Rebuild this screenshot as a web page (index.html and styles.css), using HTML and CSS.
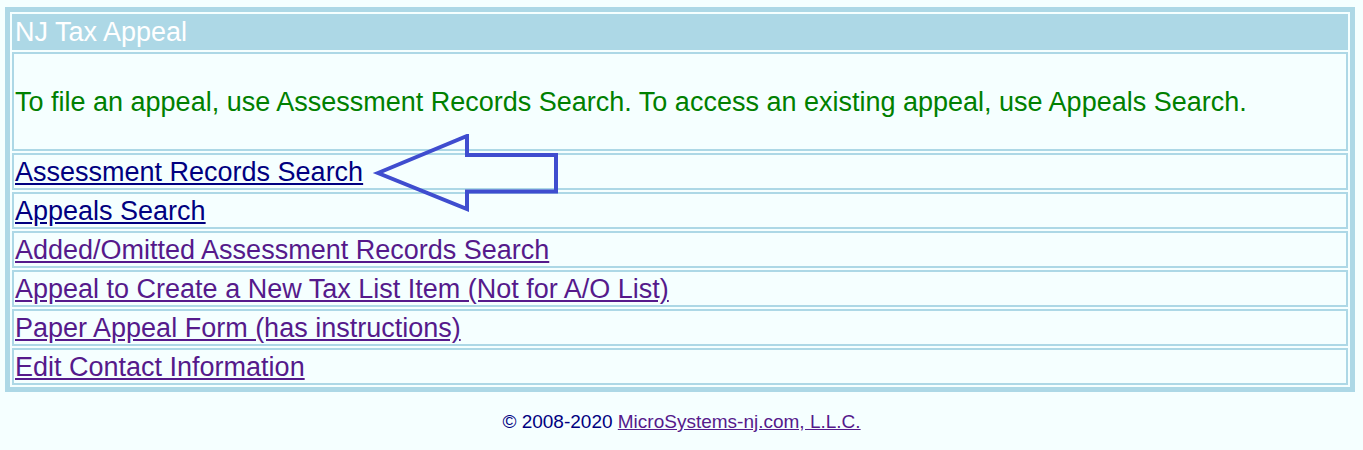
FILE: index.html
```html
<!DOCTYPE html>
<html lang="en">
<head>
  <meta charset="UTF-8">
  <title>NJ Tax Appeal</title>
  <link rel="stylesheet" href="styles.css">
</head>
<body>

  <div class="page">
    <table class="menu">
      <tr>
        <td class="title">NJ Tax Appeal</td>
      </tr>
      <tr>
        <td class="intro">To file an appeal, use Assessment Records Search. To access an existing appeal, use Appeals Search.</td>
      </tr>
      <tr>
        <td class="item"><a href="#" class="new">Assessment Records Search</a></td>
      </tr>
      <tr>
        <td class="item"><a href="#" class="new">Appeals Search</a></td>
      </tr>
      <tr>
        <td class="item"><a href="#">Added/Omitted Assessment Records Search</a></td>
      </tr>
      <tr>
        <td class="item"><a href="#">Appeal to Create a New Tax List Item (Not for A/O List)</a></td>
      </tr>
      <tr>
        <td class="item"><a href="#">Paper Appeal Form (has instructions)</a></td>
      </tr>
      <tr>
        <td class="item"><a href="#">Edit Contact Information</a></td>
      </tr>
    </table>

    <!-- arrow pointing at the first link -->
    <svg class="arrow" width="200" height="90" viewBox="0 0 200 90">
      <polygon points="12,39 101,2 101,21 190,21 190,57.5 101,57.5 101,75" fill="none" stroke="#3f4dcf" stroke-width="4" stroke-linejoin="miter" />
    </svg>
  </div>

  <p class="footer">&copy; 2008-2020 <a href="#">MicroSystems-nj.com, L.L.C.</a></p>

</body>
</html>
```

FILE: styles.css
```css
body {
  margin: 0;
  background-color: #f5ffff;
  font-family: "Liberation Sans", Arial, sans-serif;
}

.page {
  position: relative;
  margin: 7px 8px 0 5px;
}

/* 바깥 테두리 5px, 셀 사이 간격 2px */
.menu {
  width: 100%;
  border: 5px solid #add8e6;
  border-spacing: 2px;
}

.menu td {
  border: 2px solid #add8e6;
  padding: 1px;
  font-size: 27px;
}

.title {
  height: 30px;
  background-color: #add8e6;
  color: #ffffff;
  line-height: 30px;
}

.menu td.intro {
  height: 93px;
  padding: 2px 1px 0;
  color: #008000;
}

.menu td.item {
  height: 31px;
  line-height: 31px;
  padding: 2px 1px 0;
}

.item a {
  color: #551a8b;
}

.item a.new {
  color: #000080;
}

.arrow {
  position: absolute;
  left: 361px;
  top: 127px;
}

.footer {
  margin: 19px 0 0;
  text-align: center;
  font-size: 19px;
  color: #000080;
}

.footer a {
  color: #551a8b;
}
```
